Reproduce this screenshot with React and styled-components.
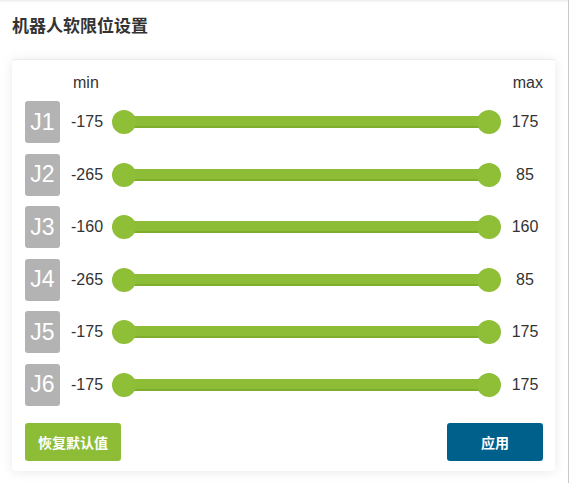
import React from "react";
import styled, { createGlobalStyle } from "styled-components";

const Global = createGlobalStyle`
  html, body { margin: 0; padding: 0; background: #fff; }
  body { font-family: "Liberation Sans", "Noto Sans CJK SC", Arial, sans-serif; color: #333; }
`;

const Page = styled.div`
  box-sizing: border-box;
  width: 569px;
  height: 483px;
  padding: 12px 14px 0 12px;
  border-right: 1px solid #c9c9c9;
  background: linear-gradient(#ececec 0, #fafafa 2px, #fff 3px);
  overflow: hidden;
`;

const Title = styled.h1`
  margin: 0;
  font-family: "Noto Sans CJK SC", sans-serif;
  font-size: 17px;
  font-weight: 700;
  line-height: 26px;
  color: #333;
`;

const Card = styled.div`
  box-sizing: border-box;
  margin-top: 21px;
  width: 543px;
  padding: 13px 12px 10px 13px;
  background: #fff;
  border-radius: 3px;
  border-top: 1px solid #ebebf2;
  box-shadow: 0 1px 12px rgba(0, 0, 0, 0.09);
`;

const HeaderRow = styled.div`
  display: flex;
  justify-content: space-between;
  padding-left: 48px;
  font-size: 16px;
  line-height: 20px;
  height: 20px;
  color: #333;
`;

const Rows = styled.div`
  display: flex;
  flex-direction: column;
  gap: 10.5px;
  margin-top: 8px;
`;

const Row = styled.div`
  display: grid;
  grid-template-columns: 35px 52px 1fr 42px;
  align-items: center;
  height: 42px;
`;

const Badge = styled.div`
  width: 35px;
  height: 42px;
  border-radius: 3px;
  background: #b3b3b3;
  color: #fff;
  font-size: 23px;
  display: flex;
  align-items: center;
  justify-content: center;
`;

const LeftVal = styled.div`
  font-size: 16px;
  padding-left: 11px;
  white-space: nowrap;
`;

const RightVal = styled.div`
  font-size: 16px;
  text-align: center;
  padding-left: 6px;
`;

const Slider = styled.div`
  position: relative;
  height: 24px;
`;

const Track = styled.div`
  position: absolute;
  left: 12px;
  right: 12px;
  top: 6px;
  height: 12px;
  background: #8dbd36;
  box-shadow: inset 0 -2px 0 #7fae2c;
`;

const Thumb = styled.div`
  position: absolute;
  top: 0;
  width: 24px;
  height: 24px;
  border-radius: 50%;
  background: #8fbe37;
  ${(p) => (p.$end ? "right: 0;" : "left: 0;")}
`;

const Footer = styled.div`
  display: flex;
  justify-content: space-between;
  margin-top: 17px;
`;

const Button = styled.button`
  width: 96px;
  height: 38px;
  border: none;
  border-radius: 3px;
  color: #fff;
  font-family: "Noto Sans CJK SC", sans-serif;
  font-weight: 700;
  font-size: 14px;
  background: ${(p) => (p.$primary ? "#00608c" : "#8dbd36")};
  cursor: pointer;
`;

const joints = [
  ["J1", -175, 175],
  ["J2", -265, 85],
  ["J3", -160, 160],
  ["J4", -265, 85],
  ["J5", -175, 175],
  ["J6", -175, 175],
];

export default function App() {
  return (
    <>
      <Global />
      <Page>
        <Title>机器人软限位设置</Title>
        <Card>
          <HeaderRow>
            <span>min</span>
            <span>max</span>
          </HeaderRow>
          <Rows>
            {joints.map(([j, mn, mx]) => (
              <Row key={j}>
                <Badge>{j}</Badge>
                <LeftVal>{mn}</LeftVal>
                <Slider>
                  <Track />
                  <Thumb />
                  <Thumb $end />
                </Slider>
                <RightVal>{mx}</RightVal>
              </Row>
            ))}
          </Rows>
          <Footer>
            <Button>恢复默认值</Button>
            <Button $primary>应用</Button>
          </Footer>
        </Card>
      </Page>
    </>
  );
}
